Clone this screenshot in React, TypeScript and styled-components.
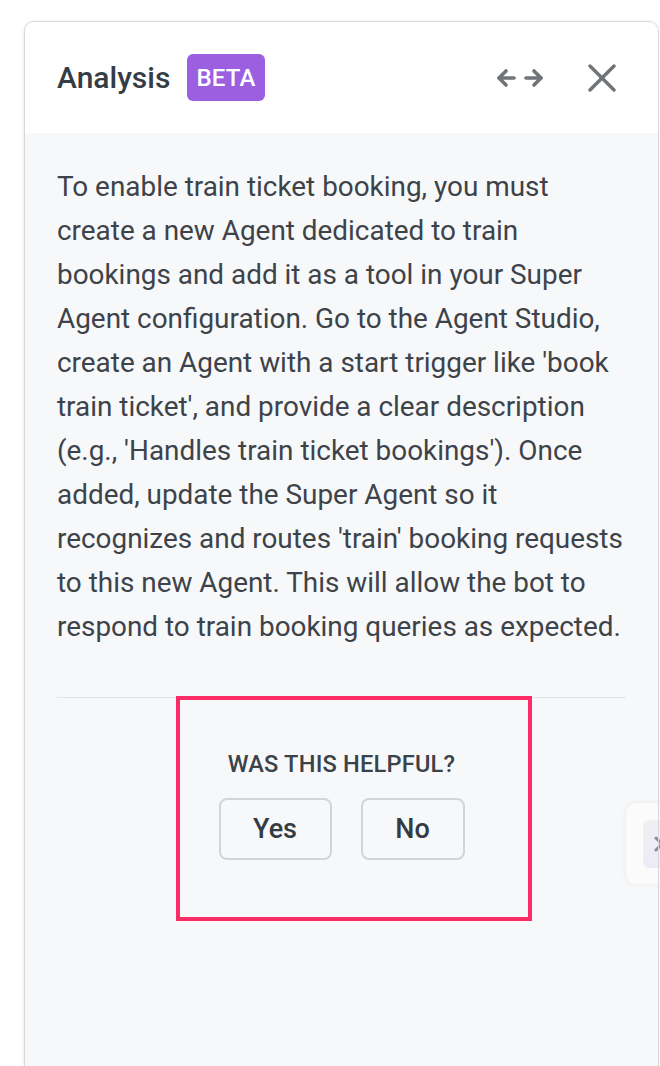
import React from "react";
import styled, { createGlobalStyle } from "styled-components";

const Global = createGlobalStyle`
  html, body { margin: 0; padding: 0; background: #ffffff; overflow: hidden; }
  body { font-family: Roboto, "Noto Sans", "Liberation Sans", sans-serif; }
  * { box-sizing: border-box; }
`;

const Page = styled.div`
  width: 660px;
  height: 1066px;
  padding: 21px 0 0 24px;
  position: relative;
  overflow: hidden;
`;

const Panel = styled.div`
  width: 635px;
  height: 1100px;
  border: 1px solid #d6d8db;
  border-radius: 10px;
  overflow: hidden;
  display: flex;
  flex-direction: column;
  background: #f7f8fa;
  box-shadow: -1px 0 3px rgba(0, 0, 0, 0.06);
`;

const Header = styled.div`
  height: 111px;
  background: #ffffff;
  display: flex;
  align-items: center;
  padding: 0 42px 0 32px;
  flex-shrink: 0;
`;

const Title = styled.h1`
  margin: 0;
  font-size: 30px;
  font-weight: 500;
  color: #353c44;
`;

const Badge = styled.span`
  margin-left: 17px;
  background: #9b5fe0;
  color: #ffffff;
  font-size: 24px;
  font-weight: 500;
  height: 47px;
  padding: 0 9px;
  border-radius: 6px;
  display: inline-flex;
  align-items: center;
  letter-spacing: 0.2px;
`;

const Spacer = styled.div`
  flex: 1;
`;

const IconButton = styled.button<{ $gap?: number }>`
  background: none;
  border: none;
  padding: 0;
  margin: 0;
  display: flex;
  align-items: center;
  justify-content: center;
  cursor: pointer;
  margin-left: ${(p) => p.$gap ?? 0}px;
`;

const Body = styled.div`
  padding: 32px 32px 0 32px;
  display: flex;
  flex-direction: column;
`;

const Paragraph = styled.p`
  margin: 0;
  font-size: 27.9px;
  line-height: 44px;
  color: #3d4349;
`;

const Divider = styled.hr`
  border: none;
  border-top: 1px solid #e2e4e7;
  margin: 48px 0 0 0;
`;

const Feedback = styled.div`
  display: flex;
  flex-direction: column;
  align-items: center;
  padding-top: 52px;
  position: relative;
`;

const Question = styled.div`
  font-size: 23.6px;
  line-height: 28px;
  font-weight: 500;
  color: #3a424a;
  letter-spacing: 0.2px;
`;

const Buttons = styled.div`
  display: flex;
  gap: 29px;
  margin-top: 20px;
`;

const Choice = styled.button<{ $w: number }>`
  width: ${(p) => p.$w}px;
  height: 62px;
  background: #f7f8fa;
  border: 2px solid #d3d4d6;
  border-radius: 8px;
  font-family: Roboto, "Noto Sans", sans-serif;
  font-size: 27px;
  font-weight: 500;
  color: #343b43;
  cursor: pointer;
`;

const Highlight = styled.div`
  position: absolute;
  left: 119px;
  top: -2px;
  width: 356px;
  height: 225px;
  border: 4px solid #fb2d67;
  pointer-events: none;
`;

const SideTab = styled.div`
  position: absolute;
  left: 626px;
  top: 803px;
  width: 60px;
  height: 81px;
  background: #fbfbfc;
  border-radius: 10px;
  box-shadow: 0 0 6px rgba(0, 0, 0, 0.06);
  display: flex;
  align-items: center;
  padding-left: 17px;
`;

const SideTabInner = styled.div`
  width: 40px;
  height: 48px;
  border-radius: 6px;
  background: linear-gradient(180deg, #eef0f4 0%, #efeaf7 100%);
  display: flex;
  align-items: center;
  padding-left: 10px;
`;

const PanelEdge = styled.div`
  position: absolute;
  left: 658px;
  top: 790px;
  width: 1px;
  height: 110px;
  background: #d6d8db;
`;

const ArrowsIcon = () => (
  <svg width="48" height="22" viewBox="0 0 48 22" fill="none" stroke="#6f7479" strokeWidth="3.6" strokeLinecap="round" strokeLinejoin="round">
    <path d="M3 11 H18" />
    <path d="M10 4 L3 11 L10 18" />
    <path d="M30 11 H45" />
    <path d="M38 4 L45 11 L38 18" />
  </svg>
);

const CloseIcon = () => (
  <svg width="28" height="28" viewBox="0 0 28 28" fill="none" stroke="#6f7479" strokeWidth="3.4" strokeLinecap="round">
    <path d="M2 2 L26 26" />
    <path d="M26 2 L2 26" />
  </svg>
);

const Chevron = () => (
  <svg width="12" height="16" viewBox="0 0 12 16" fill="none" stroke="#8a8e93" strokeWidth="3" strokeLinecap="round" strokeLinejoin="round">
    <path d="M3 2 L9 8 L3 14" />
  </svg>
);

export default function App() {
  return (
    <>
      <Global />
      <Page>
        <Panel>
          <Header>
            <Title>Analysis</Title>
            <Badge>BETA</Badge>
            <Spacer />
            <IconButton aria-label="Expand">
              <ArrowsIcon />
            </IconButton>
            <IconButton aria-label="Close" $gap={44}>
              <CloseIcon />
            </IconButton>
          </Header>
          <Body>
            <Paragraph>
              To enable train ticket booking, you must create a new Agent dedicated to train bookings and add it as a
              tool in your Super Agent configuration. Go to the Agent Studio, create an Agent with a start trigger like
              'book train ticket', and provide a clear description (e.g., 'Handles train ticket bookings'). Once added,
              update the Super Agent so it recognizes and routes 'train' booking requests to this new Agent. This will
              allow the bot to respond to train booking queries as expected.
            </Paragraph>
            <Divider />
            <Feedback>
              <Question>WAS THIS HELPFUL?</Question>
              <Buttons>
                <Choice $w={113}>Yes</Choice>
                <Choice $w={104}>No</Choice>
              </Buttons>
              <Highlight />
            </Feedback>
          </Body>
        </Panel>
        <SideTab>
          <SideTabInner>
            <Chevron />
          </SideTabInner>
        </SideTab>
        <PanelEdge />
      </Page>
    </>
  );
}
